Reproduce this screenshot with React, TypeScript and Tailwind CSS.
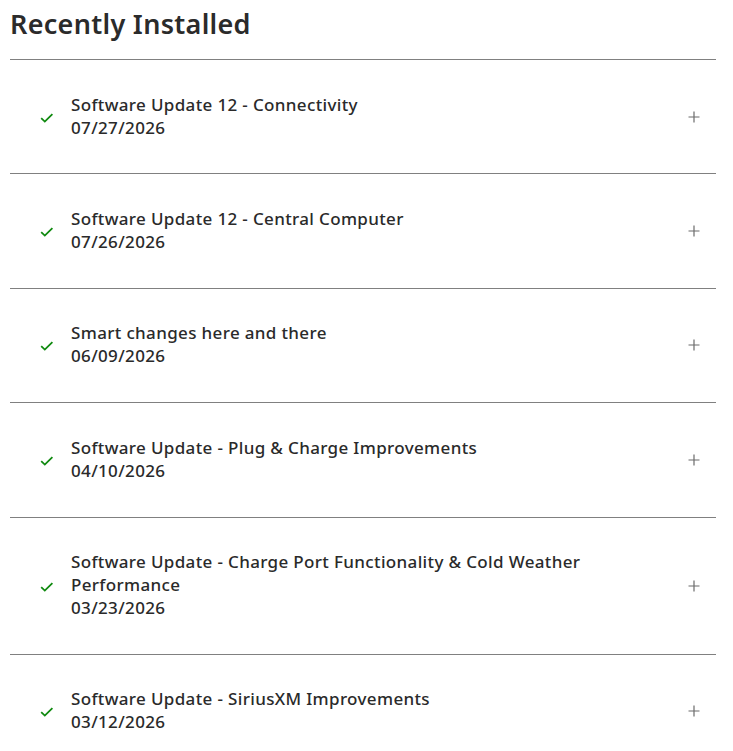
import React from 'react';

const updates = [
  { title: 'Software Update 12 - Connectivity', date: '07/27/2026' },
  { title: 'Software Update 12 - Central Computer', date: '07/26/2026' },
  { title: 'Smart changes here and there', date: '06/09/2026' },
  { title: 'Software Update - Plug & Charge Improvements', date: '04/10/2026' },
  { title: 'Software Update - Charge Port Functionality & Cold Weather Performance', date: '03/23/2026' },
  { title: 'Software Update - SiriusXM Improvements', date: '03/12/2026' },
];

const Check = () => (
  <svg width="14" height="12" viewBox="0 0 14 12" fill="none">
    <path d="M1.2 6.2 L4.8 9.6 L12.4 2.2" stroke="#108a10" strokeWidth="1.8" />
  </svg>
);

const Plus = () => (
  <svg width="12" height="12" viewBox="0 0 12 12" fill="none">
    <path d="M6 0.5 V11.5 M0.5 6 H11.5" stroke="#6b6b6b" strokeWidth="1.2" />
  </svg>
);

const App = () => {
  return (
    <div className="bg-white min-h-screen px-[10px] pt-[5px] text-[#2a2a2a]" style={{ fontFamily: '"Noto Sans", Arial, sans-serif' }}>
      <h2 className="text-[27px] font-semibold tracking-[0.3px] leading-[38px] text-[#2b2b2b] pb-[16px]">Recently Installed</h2>
      <div className="border-t border-[#808080] w-[706px]">
        {updates.map((u, i) => (
          <div key={i} className="flex items-center border-b border-[#808080] pt-[32.5px] pb-[34.9px] pl-[30px] pr-[16px]">
            <div className="w-[31px] shrink-0 pt-[4px]">
              <Check />
            </div>
            <div className="flex-1 text-[17px] font-medium tracking-[0.35px] leading-[23px] max-w-[540px]">
              <div>{u.title}</div>
              <div>{u.date}</div>
            </div>
            <div className="ml-auto pt-[2px]">
              <Plus />
            </div>
          </div>
        ))}
      </div>
    </div>
  );
};

export default App;
